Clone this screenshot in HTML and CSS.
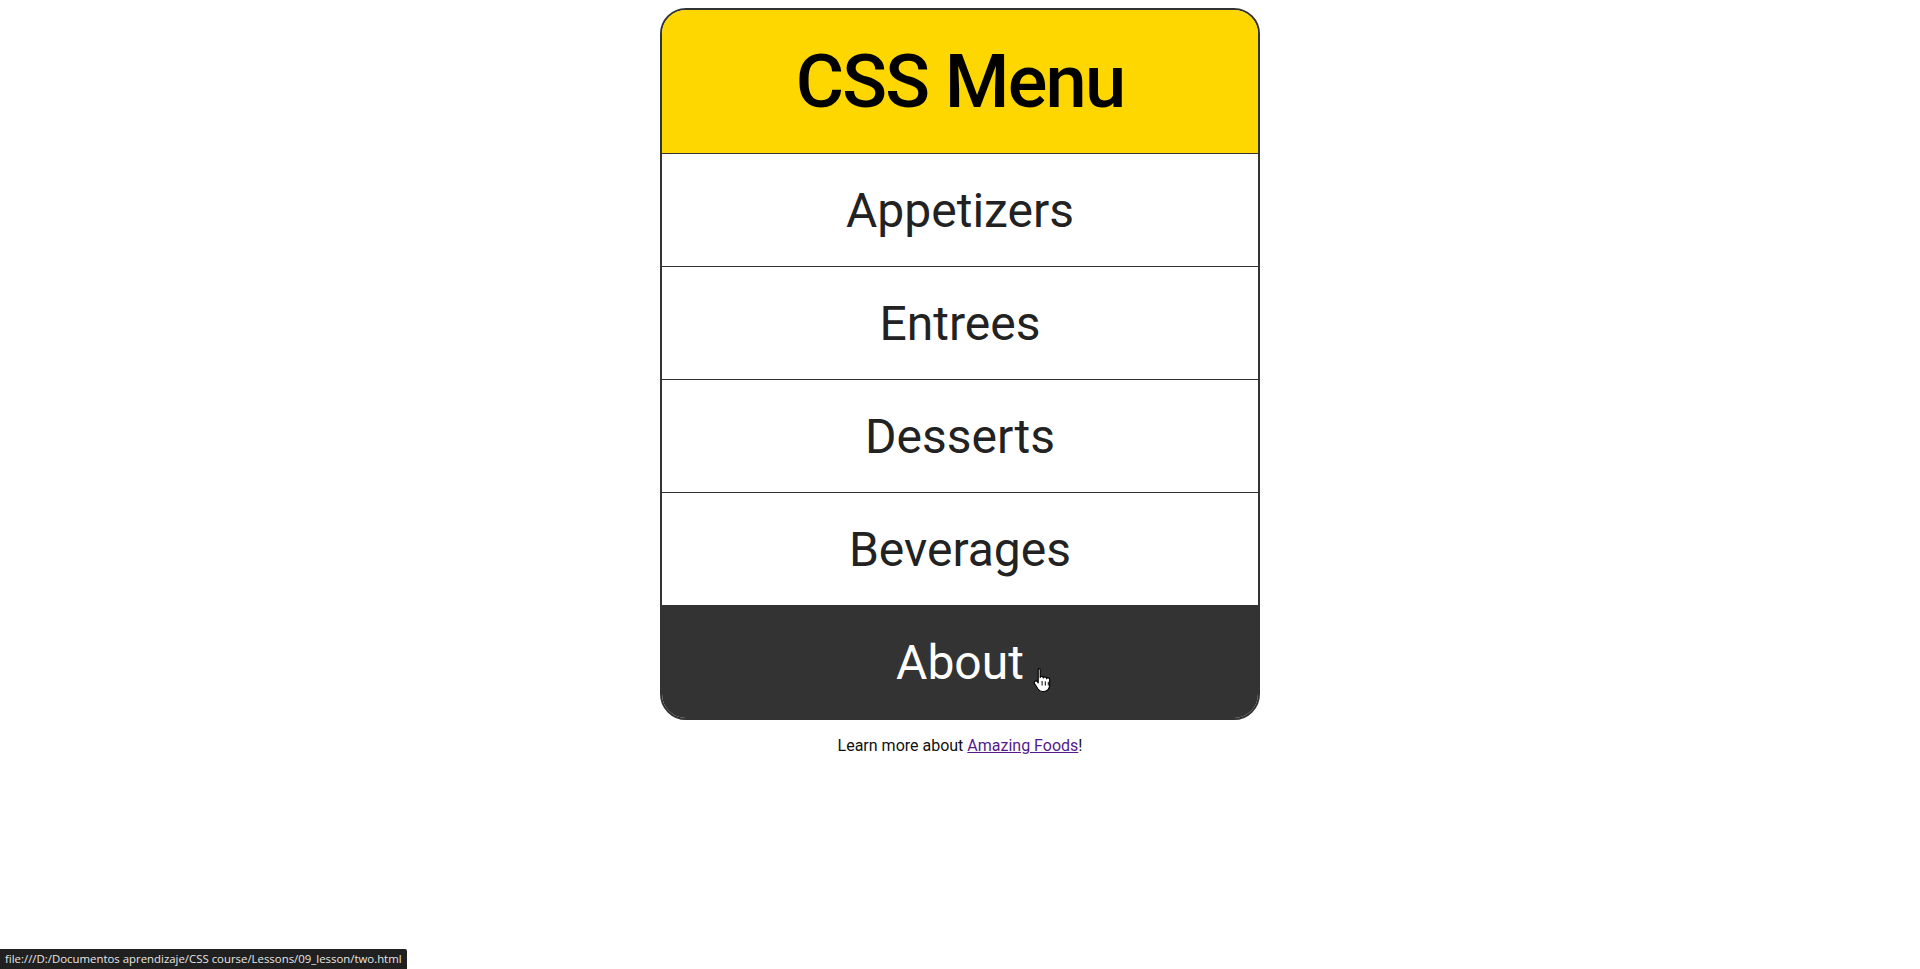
FILE: index.html
```html
<!DOCTYPE html>
<html lang="en">
<head>
<meta charset="utf-8">
<title>CSS Menu</title>
<link rel="stylesheet" href="styles.css">
</head>
<body>
<div class="menu">
  <h1 class="menu-title">CSS Menu</h1>
  <ul class="menu-list">
    <li class="menu-item">Appetizers</li>
    <li class="menu-item">Entrees</li>
    <li class="menu-item">Desserts</li>
    <li class="menu-item">Beverages</li>
    <li class="menu-item menu-item-active">About
      <svg class="cursor" width="20" height="26" viewBox="0 0 20 26" aria-hidden="true">
        <path d="M5.5 1.5c1 0 1.7.8 1.7 1.8v7.2c.3-.9 1.1-1.4 1.9-1.2.8.2 1.3.9 1.3 1.7.3-.8 1.1-1.2 1.900-1 .8.2 1.3.9 1.3 1.7.3-.7 1.1-1.1 1.8-.9.8.2 1.3 1 1.3 1.8v5.4c0 3.6-2.4 6.5-6 6.5H9.5c-2 0-3.4-.9-4.5-2.5L1.6 16.7c-.6-.9-.4-2 .4-2.5.8-.5 1.700-.3 2.3.4l.9 1.2V3.3c0-1 .3-1.8.3-1.8z" fill="#fff" stroke="#000" stroke-width="1.2" stroke-linejoin="round"/>
        <path d="M9.1 14v4.5M12.3 14.4v4.1M15.3 14.8v3.7" stroke="#000" stroke-width="1" fill="none"/>
      </svg>
    </li>
  </ul>
</div>
<p class="footer-note">Learn more about <a class="footer-link" href="#">Amazing Foods</a>!</p>
<div class="status-bar">file:///D:/Documentos aprendizaje/CSS course/Lessons/09_lesson/two.html</div>
</body>
</html>
```

FILE: styles.css
```css
html, body {
  margin: 0;
  padding: 0;
}

body {
  padding-top: 8px;
  font-family: Roboto, "Liberation Sans", sans-serif;
  background: #fff;
  color: #000;
}

.menu {
  width: 596px;
  margin: 0 auto;
  border: 2px solid #333;
  border-radius: 26px;
  overflow: hidden;
}

.menu-title {
  margin: 0;
  height: 143px;
  display: flex;
  align-items: center;
  justify-content: center;
  background: #ffd700;
  font-size: 74px;
  font-weight: 500;
  letter-spacing: -1.8px;
  color: #000;
  border-bottom: 1px solid #333;
}

.menu-list {
  list-style: none;
  margin: 0;
  padding: 0;
}

.menu-item {
  position: relative;
  height: 112px;
  display: flex;
  align-items: center;
  justify-content: center;
  font-size: 48px;
  color: #222;
  background: #fff;
  border-bottom: 1px solid #333;
}

.menu-item-active {
  background: #333;
  color: #fff;
  border-bottom: none;
}

.cursor {
  position: absolute;
  left: 371px;
  top: 61px;
}

.footer-note {
  margin: 16px 0;
  text-align: center;
  font-size: 16px;
  color: #111;
}

.footer-link {
  color: #551a8b;
}

.status-bar {
  position: fixed;
  left: 0;
  bottom: 0;
  height: 20px;
  line-height: 20px;
  padding: 0 5px 0 5px;
  background: #202020;
  color: #e6e6e6;
  font-family: "Open Sans", "Noto Sans", sans-serif;
  font-size: 11.4px;
  border-top-right-radius: 2px;
}
```
